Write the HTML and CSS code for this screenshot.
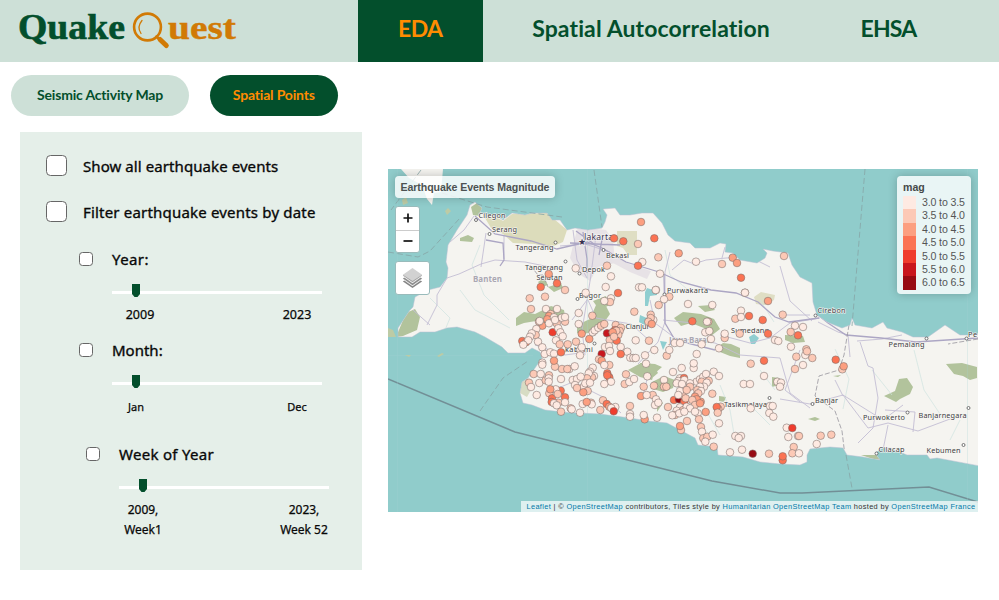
FILE: index.html
```html
<!DOCTYPE html>
<html lang="en">
<head>
<meta charset="utf-8">
<title>Quake Quest</title>
<link rel="stylesheet" href="styles.css">
</head>
<body>
<header class="topbar">
  <svg class="logo" viewBox="0 0 358 62">
    <g class="logo-text">
      <text class="green" x="18" y="39" font-size="35" textLength="107" lengthAdjust="spacingAndGlyphs">Quake</text>
      <text class="amber" x="168" y="39" font-size="34" textLength="68" lengthAdjust="spacingAndGlyphs">uest</text>
    </g>
    <g fill="none" stroke="#d17a05" stroke-linecap="round">
      <circle cx="147.500" cy="27" r="13.400" stroke-width="2.600"/>
      <path d="M142 20.500q-5.500 6.500-1 13" stroke-width="1.300"/>
      <path d="M156.500 36.500l2 2" stroke-width="2.500"/>
      <path d="M160 39.500l6.300 6" stroke-width="5"/>
    </g>
  </svg>
  <nav class="tabs">
    <a class="tab active">EDA</a>
    <a class="tab wide">Spatial Autocorrelation</a>
    <a class="tab last">EHSA</a>
  </nav>
</header>
<div class="pills">
  <a class="pill first">Seismic Activity Map</a>
  <a class="pill active">Spatial Points</a>
</div>
<main class="content">
  <section class="panel">
    <label class="check"><span class="box"></span><span class="t-show">Show all earthquake events</span></label>
    <label class="check second"><span class="box"></span><span class="t-filter">Filter earthquake events by date</span></label>
    <div class="group year">
      <label class="check small"><span class="box"></span><span class="t-year">Year:</span></label>
      <div class="slider"><svg class="thumb" viewBox="0 0 8 13"><path d="M0 0h8v10l-2.500 3h-3L0 10z"/></svg></div>
      <div class="ticks"><span>2009</span><span>2023</span></div>
    </div>
    <div class="group month">
      <label class="check small"><span class="box"></span><span class="t-month">Month:</span></label>
      <div class="slider"><svg class="thumb" viewBox="0 0 8 13"><path d="M0 0h8v10l-2.500 3h-3L0 10z"/></svg></div>
      <div class="ticks"><span>Jan</span><span>Dec</span></div>
    </div>
    <div class="group week">
      <label class="check small"><span class="box"></span><span class="t-week">Week of Year</span></label>
      <div class="slider"><svg class="thumb" viewBox="0 0 8 13"><path d="M0 0h8v10l-2.500 3h-3L0 10z"/></svg></div>
      <div class="ticks"><span>2009,<br>Week1</span><span>2023,<br>Week 52</span></div>
    </div>
  </section>
  <section class="map">
    <svg class="tiles" viewBox="388 169 590 343">
      <defs><clipPath id="java"><path id="coast" d="M398 337L398 328 410 310 413 307 415 297 428 290 440 287 447 278 448 268 446 262 448 245 457 230 467 215 470 205 475 202 482 208 480 213 498 217 503 220 512 213 525 215 532 213 547 213 552 220 560 220 567 230 575 228 588 230 602 228 605 222 607 215 603 209 615 208 620 215 630 215 642 213 653 213 662 223 668 235 675 241 690 243 695 248 710 248 720 243 726 244 725 252 733 253 740 260 757 263 765 258 767 253 763 249 773 251 788 253 792 265 800 277 812 283 813 302 817 315 827 322 842 328 850 325 852 318 855 325 872 328 883 322 887 328 902 332 913 337 928 337 945 325 960 335 980 335V466L937 458 930 459 927 455 907 455 890 448 883 448 875 453 880 460 863 457 847 455 843 448 830 447 810 449 807 455 807 462 800 465 780 464 760 462 743 457 718 455 717 447 698 445 695 438 680 430 667 423 648 421 630 418 600 414 580 413 572 413 545 410 532 405 523 403 520 393 522 382 528 378 535 368 542 358 540 352 532 348 525 353 508 353 502 347 485 337 475 332 457 327 447 328 435 332 420 332 412 337z"/></clipPath></defs>
      <rect x="388" y="169" width="590" height="343" fill="#90cccb"/>
      <use href="#coast" fill="#f5f4f0"/>
      <path fill="#f5f4f0" d="M401 169L409 178 422 185 427 199 432 205 434 193 441 192 443 169z"/>
      <g clip-path="url(#java)">
        <path fill="#dcdcbb" d="M482 213l16 5 5 3 9-7 35-1 20 17-4 12-14 6-14-4-22-1-10-9-12-6z"/>
        <path fill="#dfdec4" d="M617 231h20v24h-9l-5-7-6-2zM754 297l7-5 14 3-1 5-9 5-9-1z"/>
        <g fill="#b2c39c">
          <path d="M471 207l6-4 6 6-3 7-7-1zM460 238l8-3 6 3-2 4-12-1zM396 337l10-24 9-4 5 8-3 13-14 6z"/>
          <path d="M516 318l8-6 11 2 16-8 13 4 2 12-9-3-8 5-13-3-12 2-8 3zM577 325l13-6 6-14 10 1 4 8-7 10-8 7-11 3-7-1zM593 301l13-5 3 9-9 6z"/>
          <path d="M674 318l9-6 18 2 13 5 6 10-9 7-7-8-13-5-10 3zM698 306l13-1 4 5-10 2zM723 343l8 1 9 4v10l-10-2-10-4-2-5zM628 370l13-7 14 1 7 3-8 7-2 6-12-3zM652 382l12-6 11 4-2 8-10 4-10-3zM640 363l14 3 4 7-7 6-11-5zM719 396l7 1-2 5-5-1zM772 377l7 1v7l-7 2zM657 398l6 5-6 9zM538 282l6-4 4 7-6 2zM548 287l13-4 2 5-9 4z"/>
          <path d="M884 396l11-5 4-12 8-1 6 9-3 7-10 5-4 3zM946 364l16-1 15 4v11l-7 2-7-4-9-2zM785 335l18 1 2 6-12 1-8-3zM808 419l7-2 5 2-5 2zM861 455l15 0 5 5-8-1zM833 376l8-1-3 2z"/>
        </g>
        <path fill="#d7dcc4" d="M520 383l8-5 3 12-4 7-7-4z"/>
        <path fill="#ddd5df" d="M578 227l28 3 7 10 2 23-17 4-8 14-11-7-9-16 4-17zM613 254l16 10 22 7-4 8-17-7-19-10z" opacity=".6"/>
        <path fill="#8fced0" d="M647 288l6 2 4-3v8l-7 1-2 10h-3v-14zM640 315l9 4-3 7-7-4zM749 337l5-3 5 4-4 6-4 0zM660 341l7 1-4 8z"/>
        <path fill="none" stroke="#cfe3df" stroke-width=".7" d="M430 298l20 20-5 12M480 245l-8 20 12 30 25 25M460 290l15 20 35 18M720 385l10 25 5 30M750 405l20 20M665 250l5 25 22 18M760 370l15 20M835 349l14 30-6 30M914 350l10 40 20 30M950 440l10-20M872 370l20 25M700 400l20 35M540 365l15 25M760 300l14 22"/>
        <g fill="none" stroke="#c3bdd4" stroke-width=".9">
          <path d="M447 278l12-4 22-10 14-4 30 2 35 7M504 235l0 24M486 233l-5 34M447 278l-10 17 0 10-10 20M413 310l17 15M474 216l-10 14-14 12M560 246l25-2 25 8M573 230l4 30 10 18M596 235l-5 40-4 25-15 20M587 300l-5 30 3 25M588 300l8 18 35 6 20 18M670 252l-5 20 0 50-7 20-20 22M650 300l5 23 20 15 40 5 25 12 40 3 10 35 20 15M663 320l30 3M720 335l30 8 20-5 20-15 30-5"/>
          <path d="M672 270l12-10 10 4 12-4 20-2 24-1 20 10M725 247l-3 11M780 266l10 35 22 20M780 315l30 0M818 322l20 10 10 3 2 22M902 335l-20 4-25 2M860 342l8 24 5 2 5 30-5 30-15 15M780 399l30 5 33-9 40 25 20-15M843 395l25 33 20-5 30 8 40-15M885 410l30 2-2 20M883 450l5-25M800 350l-15 40 15 12M835 380l8 16M648 375l-6 25M553 390l20-8 30 15 18 16M535 345l30 10 22-3"/>
        </g>
        <g fill="none" stroke="#aca6c4" stroke-width="1.300">
          <path d="M475 216l20 18 36 7 26 8 30-7 15 6 24 14 33 10 22 10 30 8 25 3 22 9 17 15 14 5 30-4"/>
          <path d="M583 232l4 27 0 14M576 231l18 13M603 235l-4 20M570 243l50 2M664 275l1 48 10 17 40 10M818 315l10 8 18 12 35 3 35 4 62-4M486 240l17 3 1 17-4 6"/>
        </g>
        <path fill="none" stroke="#97949d" stroke-width=".8" stroke-dasharray="5 2" d="M849 325l-5 30-5 15-20 6-4 20 20 15 7 20 3 25M530 265l8 10 5 0 5 12M978 339l-30 5"/>
      </g>
      <use href="#coast" fill="none" stroke="#b9bfd2" stroke-width=".5"/>
      <g fill="none" stroke="#86a5a6" stroke-width=".8" stroke-dasharray="6 3">
        <path d="M388 252l30 5 12-6 30-33M442 193l45 14 75 10M594 170l8 57M865 169l-13 157M846 455l6 33M480 411l23-33 25-17M421 170l-30 40"/>
      </g>
      <path d="M388 379L515 432 712 481 780 493 802 493 929 487 978 502" fill="none" stroke="#728f96" stroke-width="1.500"/>
      <path d="M397.500 169v343M388 355.500h145M587.500 169v343M967.500 169v343" stroke="#a5d3d3" stroke-width=".5" opacity=".5"/>
      <path d="M402 200l4-3 2 6-5 2zM445 211l3-3 3 3-4 4zM437 356l5-3 2 1-5 3zM405 355h6l-2 2zM388 328l5 2 3 7h-8z" fill="#bdcba5"/>
      <g class="places">
        <text x="478.500" y="218" textLength="27">Cilegon</text><text x="492" y="231.500" textLength="25">Serang</text>
        <text x="515.500" y="250" textLength="38">Tangerang</text><text x="525" y="270" textLength="38">Tangerang</text>
        <text x="536.500" y="279.500" textLength="26">Selatan</text><text x="606" y="257.500" textLength="23">Bekasi</text>
        <text x="582" y="271.500" textLength="23">Depok</text><text x="579" y="297.500" textLength="22">Bogor</text>
        <text x="667" y="292.500" textLength="41">Purwakarta</text><text x="625.500" y="328.500" textLength="24">Cianjur</text>
        <text x="731" y="333" textLength="38">Sumedang</text><text x="817.500" y="313" textLength="28">Cirebon</text>
        <text x="724" y="406.500" textLength="43">Tasikmalaya</text><text x="815" y="402.500" textLength="23">Banjar</text>
        <text x="888.500" y="347" textLength="36">Pemalang</text><text x="968" y="337" textLength="9">Pe</text>
        <text x="863" y="420" textLength="42">Purwokerto</text><text x="918.500" y="418" textLength="48">Banjarnegara</text>
        <text x="878.500" y="451.500" textLength="26">Cilacap</text><text x="926.500" y="453" textLength="34">Kebumen</text>
        <text x="565" y="352" textLength="28">kabumi</text>
        <text class="city" x="584" y="240" textLength="29">Jakarta</text><text class="city" x="577.500" y="245" font-size="9">★</text>
        <text class="region" x="473" y="281.500" textLength="29">Banten</text><text class="region" x="669" y="343" textLength="41">Jawa Barat</text>
      </g>
      <g fill="#fff" stroke="#555" stroke-width=".8">
        <circle cx="476" cy="220" r="1.500"/><circle cx="489.500" cy="234" r="1.500"/><circle cx="555.500" cy="242.500" r="1.500"/><circle cx="565.500" cy="261.500" r="1.500"/><circle cx="603.500" cy="250" r="1.500"/><circle cx="579.500" cy="273.500" r="1.500"/><circle cx="577.500" cy="299" r="1.500"/><circle cx="664.500" cy="294.500" r="1.500"/><circle cx="815.500" cy="315.500" r="1.500"/><circle cx="769.500" cy="398" r="1.500"/><circle cx="812.500" cy="404" r="1.500"/><circle cx="907.500" cy="412.500" r="1.500"/><circle cx="968.500" cy="408" r="1.500"/><circle cx="963.500" cy="445" r="1.500"/><circle cx="876.500" cy="453.500" r="1.500"/><circle cx="926.500" cy="338.500" r="1.500"/><circle cx="966.500" cy="338.500" r="1.500"/><circle cx="594.500" cy="343.500" r="1.500"/>
      </g>
      <g id="events"></g>
    </svg>
    <div class="map-title"><span>Earthquake Events Magnitude</span></div>
    <div class="zoomer"><span><svg viewBox="0 0 10 10"><path d="M.500 5h9M5 .500v9"/></svg></span><span><svg viewBox="0 0 10 10"><path d="M.500 5h9"/></svg></span></div>
    <div class="layers"><svg viewBox="0 0 26 26">
      <path d="M13 9l10 7-10 7-10-7z" fill="#858585"/><path d="M13 7l10 7-10 7-10-7z" fill="#f4f4f4"/>
      <path d="M13 6l10 7-10 7-10-7z" fill="#8d8d8d"/><path d="M13 4l10 7-10 7-10-7z" fill="#f4f4f4"/>
      <path d="M13 3l10 7-10 7-10-7z" fill="#a2a2a2"/><path d="M13 2l10 7-10 6.500L3 9z" fill="#d2d2d2"/></svg></div>
    <div class="legend">
      <strong>mag</strong>
      <div><i class="m0"></i><span>3.0 to 3.5</span></div>
      <div><i class="m1"></i><span>3.5 to 4.0</span></div>
      <div><i class="m2"></i><span>4.0 to 4.5</span></div>
      <div><i class="m3"></i><span>4.5 to 5.0</span></div>
      <div><i class="m4"></i><span>5.0 to 5.5</span></div>
      <div><i class="m5"></i><span>5.5 to 6.0</span></div>
      <div><i class="m6"></i><span>6.0 to 6.5</span></div>
    </div>
    <div class="credit"><a>Leaflet</a> | © <a>OpenStreetMap</a> contributors, Tiles style by <a>Humanitarian OpenStreetMap Team</a> hosted by <a>OpenStreetMap France</a></div>
  </section>
</main>
<script src="events.js"></script>
</body>
</html>
```
FILE: styles.css
```css
* { box-sizing: border-box; }
body { margin: 0; width: 999px; height: 600px; overflow: hidden; background: #fff; color: #080808; font-family: "Noto Sans", sans-serif; }
.topbar { display: flex; height: 62px; background: #cde0d7; }
.logo { width: 358px; height: 62px; flex: none; }
.logo-text { font-family: "Liberation Serif", serif; font-weight: 700; }
.green { fill: #034f2c; stroke: #034f2c; stroke-width: .6px; }
.amber { fill: #d17a05; stroke: #d17a05; stroke-width: .4px; }
.tabs { display: flex; font: 700 23px/56px Lato, sans-serif; color: #034f2c; white-space: nowrap; }
.tab { display: block; height: 62px; text-align: center; }
.tab.active { width: 124.5px; color: #ff8c00; background: #034f2c; letter-spacing: -.6px; }
.tab.wide { width: 337px; letter-spacing: .12px; }
.tab.last { width: 138px; letter-spacing: -.8px; }
.pills { display: flex; gap: 21px; padding: 13px 0 0 11px; font: 700 14px/39px Lato, sans-serif; letter-spacing: -.18px; }
.pill { width: 178px; height: 41px; border-radius: 21px; background: #cde0d7; color: #034f2c; text-align: center; white-space: nowrap; }
.pill.active { width: 127.5px; background: #034f2c; color: #ff8c00; }
.content { display: flex; padding: 16px 0 0 20px; }
.panel { width: 342px; height: 437.5px; padding-top: 23px; background: #e5efe9; flex: none; }
.check { display: flex; align-items: center; height: 22px; padding-left: 26px; gap: 16px; font-size: 15px; line-height: 22px; white-space: nowrap; -webkit-text-stroke: .35px #080808; }
.check.second { margin-top: 24px; }
.box { width: 21px; height: 21px; margin-bottom: 2px; border: 1px solid #666; border-radius: 4.500px; background: #fff; flex: none; }
.small { padding-left: 0; gap: 19px; }
.small .box { width: 14px; height: 14px; margin-bottom: 0; border-radius: 3.500px; }
.t-show { letter-spacing: .08px; }
.t-filter { letter-spacing: .19px; }
.t-year { letter-spacing: .4px; }
.t-week { letter-spacing: .3px; }
.group { width: 243px; margin-left: 59px; }
.year { margin-top: 25px; }
.month { margin-top: 17px; }
.week { margin-top: 28px; margin-left: 66px; }
.week .check { line-height: 20px; }
.slider { width: 210px; height: 13px; margin: 14px 0 0 33px; padding-left: 20px; background: linear-gradient(#fff, #fff) 0 7px / 100% 3px no-repeat; }
.thumb { display: block; width: 8px; height: 13px; fill: #034f2c; }
.ticks { display: flex; justify-content: space-between; width: 210px; margin: 9px 0 0 33px; font-size: 12.500px; line-height: 17px; height: 16px; -webkit-text-stroke: .25px #080808; }
.ticks span { width: 50px; text-align: center; white-space: nowrap; }
.year .ticks span:first-child { width: 56px; }
.month .ticks { margin-top: 10px; height: 17px; font-size: 11px; }
.month .ticks span:first-child, .week .ticks span:first-child { width: 48px; }
.week .ticks { margin-top: 8px; height: 40px; line-height: 20px; font-size: 12px; }
.map { position: relative; width: 589.500px; height: 342.500px; margin: 37px 0 0 26px; overflow: hidden; flex: none; font-family: "Liberation Sans", sans-serif; }
.tiles { display: block; width: 590px; height: 343px; }
.places { font-family: "Noto Sans", sans-serif; font-size: 7.300px; fill: #3d3d42; stroke: #f7f6f3; stroke-width: 1.200px; paint-order: stroke; }
.places .city { font-size: 8.500px; fill: #383050; }
.places .region { font-size: 8px; font-weight: 700; fill: #aaa7b2; }
#events circle { stroke: #7b6b67; stroke-width: .55px; }
.map-title, .legend { position: absolute; background: rgba(255,255,255,.8); border-radius: 4px; box-shadow: 0 0 10px rgba(0,0,0,.22); color: #555; }
.map-title { left: 7px; top: 7px; width: 160px; height: 22px; font-weight: 700; font-size: 10.600px; letter-spacing: -.09px; line-height: 22px; text-align: center; white-space: nowrap; color: #4c5252; }
.zoomer { position: absolute; left: 7px; top: 37px; width: 25px; height: 47px; background: #fff; border: 1px solid #9bb; border-radius: 3px; }
.zoomer span { display: flex; height: 22.500px; align-items: center; justify-content: center; }
.zoomer span + span { border-top: 1px solid #ccc; }
.zoomer svg { width: 10px; height: 10px; stroke: #111; stroke-width: 1.700; }
.layers { position: absolute; left: 7px; top: 92px; width: 35px; height: 34px; padding: 4px; background: #fff; border: 1px solid #9bb; border-radius: 3px; }
.layers svg { display: block; width: 25px; height: 25px; }
.legend { left: 509px; top: 7px; width: 74px; height: 118px; padding: 4px 6px; font-size: 10.600px; }
.legend strong { display: block; height: 16px; line-height: 14px; color: #454a4a; }
.legend div { display: flex; gap: 6px; height: 13.400px; line-height: 12.500px; white-space: nowrap; }
.legend i { width: 13px; height: 13.500px; flex: none; }
.legend span { letter-spacing: -.14px; }
.m0 { background: #feeae2; fill: #feeae2; }
.m1 { background: #fcc9b6; fill: #fcc9b6; }
.m2 { background: #fc9f80; fill: #fc9f80; }
.m3 { background: #fb7353; fill: #fb7353; }
.m4 { background: #ef3c2d; fill: #ef3c2d; }
.m5 { background: #c8161d; fill: #c8161d; }
.m6 { background: #970b13; fill: #970b13; }
.credit { position: absolute; right: 0; bottom: 0; height: 11px; width: 457px; padding-right: 2px; text-align: right; background: rgba(255,255,255,.7); color: #333; font-size: 7.400px; letter-spacing: .345px; line-height: 11px; white-space: nowrap; }
.credit a { color: #0078a8; }
```
FILE: events.js
```js
// Each group: tile origin, then "x,y,class" triples at three units per map pixel.
const groups = [
  [515, 270, "101,12,2 126,40,3 77,51,3 150,60,1 90,80,1 44,85,1 288,19,0 272,51,0 309,69,3 212,68,0 288,85,0 285,96,1 268,93,0 372,52,0 381,52,0 48,117,1 93,117,0 126,117,0 358,125,1 232,137,1 191,129,0 191,162,0 107,132,1 102,138,2 97,148,2 117,142,0 150,155,1 140,143,0 150,141,0 82,167,2 72,155,1 74,153,0 125,160,1 102,160,0 120,150,0 113,187,4 64,177,0 62,195,1 50,190,0 22,213,3 45,200,0 33,217,2 40,211,0 25,224,0 69,215,0 130,175,0 136,187,0 143,199,0 123,211,0 134,223,1 158,223,1 183,215,1 200,191,2 223,207,2 233,187,0 239,181,0 250,173,0 258,167,1 268,162,1 276,190,5 302,165,1 318,173,1 314,183,1 310,195,1 300,180,3 293,187,4 297,190,2 304,182,1 293,187,2 284,210,1 305,212,3 297,200,1 362,211,0 82,232,0 89,252,0 106,247,0 117,251,0 138,247,3 196,239,0 195,256,0 200,232,0 270,231,0 282,228,0 285,243,0 317,231,0 337,245,0 317,252,3 260,252,5 252,268,1 260,272,2 283,285,1 268,285,0 346,263,0 355,264,0 362,264,0 120,290,1 117,272,2 82,278,0 82,284,0 141,297,1 163,297,0 157,297,1 179,289,0 56,312,1 77,312,0 102,316,1 73,339,0 92,331,1 101,325,0 101,335,0 138,327,0 42,338,1 48,351,0 65,375,0 233,293,0 225,305,0 237,318,0 231,322,1 221,310,0 216,325,1 173,330,0 186,327,0 197,320,0 206,350,0 211,340,0 225,338,0 180,345,0 186,354,1 218,363,1 205,367,2 277,310,3 283,322,3 277,316,3 288,335,0 268,342,0 333,313,1 329,342,1 343,336,0 357,327,0 137,362,3 122,358,0 103,370,1 106,358,2 111,385,3 128,372,1 150,382,3 110,396,3 130,398,1 117,400,0 125,406,0 150,397,0 167,415,1 138,425,1 195,428,0 170,418,0 203,402,0 228,398,1 230,403,0 215,396,2 264,391,1 275,402,3 283,410,2 301,411,0 289,414,0 296,424,4 256,420,1 345,408,1 345,432,0 345,440,0"],
  [640, 290, "88,20,1 72,28,0 56,45,1 144,42,0 217,45,0 48,0,0 32,74,1 40,90,0 32,84,1 25,95,1 35,102,2 157,94,3 205,95,1 201,95,0 27,152,1 196,127,0 208,123,0 213,147,0 104,159,0 120,159,0 185,163,0 80,197,1 88,180,0 43,180,0 15,196,0 170,192,0 18,221,0 161,234,0 161,220,0 125,234,0 99,246,0 22,259,0 72,270,0 237,175,0 254,144,1 254,131,0 286,86,1 303,62,0 303,81,0 327,78,3 368,90,3 384,33,2 315,8,0 299,131,1 384,131,3 405,150,0 415,153,0 332,221,1 372,212,3 372,258,0 311,282,0 330,282,0 412,275,0 221,245,0 237,258,0 170,275,0 180,268,0 190,260,0 198,252,0 206,272,1 185,275,1 200,278,0 192,290,0 180,290,0 172,300,1 183,303,0 120,265,0 132,264,3 115,273,0 133,270,0 110,280,0 150,280,0 126,282,0 150,290,1 11,290,1 42,287,1 72,290,1 79,290,1 3,318,2 38,315,1 20,315,0 48,328,0 45,345,0 55,338,0 84,351,1 102,330,3 117,328,6 128,315,1 120,303,0 140,300,1 115,315,0 133,335,3 137,325,1 170,315,1 175,310,1 165,320,2 182,335,2 170,328,2 157,330,1 165,345,1 180,340,2 217,311,1 120,352,0 110,362,0 105,375,1 97,376,0 130,360,1 140,350,0 150,355,0 118,370,0 133,365,0 173,370,0 165,365,0 197,366,2 141,393,1 177,388,1 123,420,1 120,408,2 14,388,2 51,383,0 242,350,1 235,357,1 230,351,3 233,368,1 237,400,0 183,411,1 186,425,0 190,445,1 202,440,1 218,434,0 286,438,0 303,438,0 296,444,0 332,355,0 390,348,0 398,348,0 388,369,0 400,380,0"],
  [580, 165, "183,171,2 102,220,3 130,229,3 223,220,3 174,237,1 296,265,2 235,277,1 187,291,0 174,302,3 81,302,1 240,326,0 227,375,0 348,290,0 426,297,1 458,278,2 471,294,2 483,338,3 495,383,0 -13,310,0"],
  [780, 165, "12,273,1 8,449,1 45,482,0 69,486,0 32,501,1 54,511,3"],
  [780, 340, "33,20,0 79,28,1 76,45,0 81,34,1 49,50,1 97,54,1 69,75,0 45,87,1 167,59,3 187,88,1 191,79,2 3,128,0 0,140,0 20,263,0 37,264,4 25,291,0 54,288,0 57,288,1 122,287,1 154,284,1 110,312,0 41,321,1 37,340,1 57,340,0 8,361,3 8,349,3"],
  [580, 340, "401,320,1 450,337,0 486,329,0 518,341,6 567,341,1 376,305,0 191,225,0"]
];
const layer = document.getElementById("events");
for (const [ox, oy, list] of groups) {
  for (const item of list.split(" ")) {
    const [x, y, m] = item.split(",").map(Number);
    const dot = document.createElementNS("http://www.w3.org/2000/svg", "circle");
    dot.setAttribute("cx", (ox + x / 3).toFixed(1));
    dot.setAttribute("cy", (oy + y / 3).toFixed(1));
    dot.setAttribute("r", "3.8");
    dot.setAttribute("class", "m" + m);
    layer.appendChild(dot);
  }
}
```
